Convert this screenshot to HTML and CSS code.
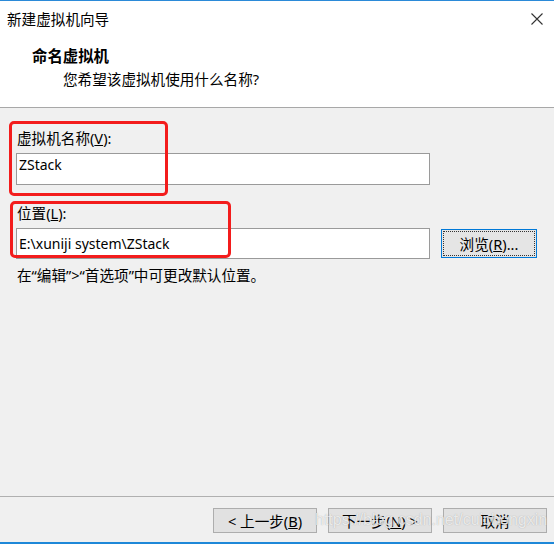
FILE: index.html
```html
<!DOCTYPE html>
<html lang="zh-CN">
<head>
<meta charset="utf-8">
<link rel="stylesheet" href="styles.css">
</head>
<body>
<div class="window">
  <div class="header">
    <div class="titlebar">
      <span class="title">新建虚拟机向导</span>
      <svg class="close" width="12" height="12" viewBox="0 0 12 12"><path d="M0.5 0.5 L11.5 11.5 M11.5 0.5 L0.5 11.5" stroke="#333" stroke-width="1.1" fill="none"/></svg>
    </div>
    <div class="heading">命名虚拟机</div>
    <div class="subtitle">您希望该虚拟机使用什么名称?</div>
  </div>
  <div class="content">
    <div class="label">虚拟机名称(<u>V</u>):</div>
    <div class="textbox tall">ZStack</div>
    <div class="label second">位置(<u>L</u>):</div>
    <div class="row">
      <div class="textbox">E:\xuniji system\ZStack</div>
      <div class="browse"><div class="focus">浏览(<u>R</u>)...</div></div>
    </div>
    <div class="hint">在“编辑”&gt;“首选项”中可更改默认位置。</div>
  </div>
  <div class="footer">
    <div class="btn">&lt; 上一步(<u>B</u>)</div>
    <div class="btn">下一步(<u>N</u>) &gt;</div>
    <div class="btn">取消</div>
  </div>
  <div class="accent"></div>
  <div class="mark mark-name"></div>
  <div class="mark mark-loc"></div>
  <div class="watermark">https://blog.csdn.net/cuichongxin</div>
</div>
</body>
</html>
```
FILE: styles.css
```css
html, body {
  margin: 0;
  padding: 0;
}
body {
  width: 554px;
  height: 544px;
  overflow: hidden;
  font-family: "Noto Sans", "Noto Sans CJK SC", sans-serif;
  font-size: 14.6px;
  color: #000;
}
.window {
  position: relative;
  width: 554px;
  height: 544px;
  display: flex;
  flex-direction: column;
  background: #f0f0f0;
  border-top: 1px solid #2b8ad8;
  box-sizing: border-box;
}
.header {
  background: #fff;
  height: 106px;
  border-bottom: 1px solid #a8a8a8;
  flex: none;
}
.titlebar {
  height: 36px;
  display: flex;
  align-items: center;
  justify-content: space-between;
  padding: 0 11px 0 7px;
}
.title {
  line-height: 18px;
}
.close {
  display: block;
  margin-top: -1px;
}
.heading {
  margin-top: 11px;
  padding-left: 32px;
  font-size: 15.4px;
  font-weight: bold;
  line-height: 18px;
}
.subtitle {
  margin-top: 4px;
  padding-left: 63px;
  line-height: 18px;
}
.content {
  flex: 1;
  padding: 21px 0 0 16px;
}
.label {
  line-height: 18px;
  padding-left: 1px;
}
.label.second {
  margin-top: 19px;
}
.textbox {
  box-sizing: border-box;
  width: 414px;
  height: 31px;
  margin-top: 6px;
  background: #fff;
  border: 1px solid #9a9a9a;
  padding: 0 0 0 2px;
  font-size: 14px;
  line-height: 29px;
  white-space: nowrap;
}
.textbox.tall {
  height: 32px;
  line-height: 20px;
  padding-top: 1px;
}
.row {
  display: flex;
  align-items: center;
  margin-top: 6px;
}
.row .textbox {
  margin-top: 0;
}
.browse {
  box-sizing: border-box;
  margin-left: 11px;
  width: 96px;
  height: 29px;
  border: 1px solid #0078d7;
  background: #e5e5e5;
  padding: 1px;
}
.focus {
  box-sizing: border-box;
  height: 100%;
  border: 1px dotted #333;
  display: flex;
  align-items: center;
  justify-content: center;
  line-height: 18px;
}
.hint {
  margin-top: 7px;
  line-height: 18px;
  padding-left: 1px;
}
.footer {
  flex: none;
  border-top: 1px solid #b0b0b0;
  height: 46px;
  box-sizing: border-box;
  padding: 11px 7px 0 0;
  display: flex;
  justify-content: flex-end;
  gap: 11px;
}
.btn {
  box-sizing: border-box;
  width: 104px;
  height: 25px;
  border: 1px solid #adadad;
  background: #e1e1e1;
  display: flex;
  align-items: center;
  justify-content: center;
  line-height: 18px;
}
.accent {
  flex: none;
  height: 2px;
  background: #1e88d8;
}
.mark {
  position: absolute;
  box-sizing: border-box;
  border: 3px solid #f31c1c;
  border-radius: 5px;
}
.mark-name {
  left: 9px;
  top: 120px;
  width: 159px;
  height: 75px;
}
.mark-loc {
  left: 10px;
  top: 200px;
  width: 221px;
  height: 57px;
}
.watermark {
  position: absolute;
  left: 315px;
  top: 509px;
  font-family: "Liberation Sans", sans-serif;
  font-size: 16px;
  line-height: 20px;
  color: rgba(255, 255, 255, 0.75);
  text-shadow: 0 0 1px rgba(120, 120, 120, 0.6);
  white-space: nowrap;
}
```
